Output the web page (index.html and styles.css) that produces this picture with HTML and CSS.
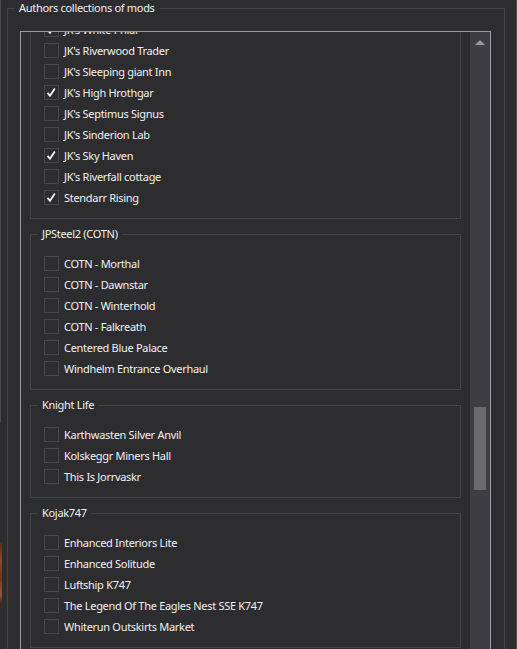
FILE: index.html
```html
<!DOCTYPE html>
<html>
<head>
<meta charset="utf-8">
<link rel="stylesheet" href="styles.css">
</head>
<body>
<div class="window">
  <div class="edge"><div class="edge-top"></div><div class="edge-img"></div></div>
  <fieldset class="outer">
    <legend>Authors collections of mods</legend>
    <div class="scroller">
      <div class="viewport">
        <div class="group first">
          <div class="rows shifted">
            <div class="row"><span class="box"><svg viewBox="0 0 15 15" width="15" height="15"><path d="M3.5 7.8 L6 10.8 L10.8 3.6" /></svg></span><span class="label">JK's White Phial</span></div>
            <div class="row"><span class="box"></span><span class="label">JK's Riverwood Trader</span></div>
            <div class="row"><span class="box"></span><span class="label">JK's Sleeping giant Inn</span></div>
            <div class="row"><span class="box"><svg viewBox="0 0 15 15" width="15" height="15"><path d="M3.5 7.8 L6 10.8 L10.8 3.6" /></svg></span><span class="label">JK's High Hrothgar</span></div>
            <div class="row"><span class="box"></span><span class="label">JK's Septimus Signus</span></div>
            <div class="row"><span class="box"></span><span class="label">JK's Sinderion Lab</span></div>
            <div class="row"><span class="box"><svg viewBox="0 0 15 15" width="15" height="15"><path d="M3.5 7.8 L6 10.8 L10.8 3.6" /></svg></span><span class="label">JK's Sky Haven</span></div>
            <div class="row"><span class="box"></span><span class="label">JK's Riverfall cottage</span></div>
            <div class="row"><span class="box"><svg viewBox="0 0 15 15" width="15" height="15"><path d="M3.5 7.8 L6 10.8 L10.8 3.6" /></svg></span><span class="label">Stendarr Rising</span></div>
          </div>
        </div>
        <fieldset class="group">
          <legend>JPSteel2 (COTN)</legend>
          <div class="rows">
            <div class="row"><span class="box"></span><span class="label">COTN - Morthal</span></div>
            <div class="row"><span class="box"></span><span class="label">COTN - Dawnstar</span></div>
            <div class="row"><span class="box"></span><span class="label">COTN - Winterhold</span></div>
            <div class="row"><span class="box"></span><span class="label">COTN - Falkreath</span></div>
            <div class="row"><span class="box"></span><span class="label">Centered Blue Palace</span></div>
            <div class="row"><span class="box"></span><span class="label">Windhelm Entrance Overhaul</span></div>
          </div>
        </fieldset>
        <fieldset class="group">
          <legend>Knight Life</legend>
          <div class="rows">
            <div class="row"><span class="box"></span><span class="label">Karthwasten Silver Anvil</span></div>
            <div class="row"><span class="box"></span><span class="label">Kolskeggr Miners Hall</span></div>
            <div class="row"><span class="box"></span><span class="label">This Is Jorrvaskr</span></div>
          </div>
        </fieldset>
        <fieldset class="group">
          <legend>Kojak747</legend>
          <div class="rows">
            <div class="row"><span class="box"></span><span class="label">Enhanced Interiors Lite</span></div>
            <div class="row"><span class="box"></span><span class="label">Enhanced Solitude</span></div>
            <div class="row"><span class="box"></span><span class="label">Luftship K747</span></div>
            <div class="row"><span class="box"></span><span class="label">The Legend Of The Eagles Nest SSE K747</span></div>
            <div class="row"><span class="box"></span><span class="label">Whiterun Outskirts Market</span></div>
          </div>
        </fieldset>
      </div>
      <div class="scrollbar">
        <div class="arrow"></div>
        <div class="thumb"></div>
      </div>
    </div>
  </fieldset>
  <div class="right-edge"></div>
</div>
</body>
</html>
```
FILE: styles.css
```css
html, body {
  margin: 0;
  padding: 0;
  background: #2d2d30;
}
.window {
  display: flex;
  align-items: flex-start;
  width: 517px;
  height: 649px;
  overflow: hidden;
  background: #2d2d30;
  font-family: "Noto Sans", "Liberation Sans", sans-serif;
  font-size: 11px;
  letter-spacing: -0.3px;
  color: #f1f1f1;
}
.edge {
  width: 2px;
  flex: none;
  display: flex;
  flex-direction: column;
}
.edge-top {
  width: 1px;
  height: 422px;
  background: #4b4b4f;
}
.edge-img {
  width: 2px;
  height: 60px;
  margin-top: 121px;
  background: linear-gradient(180deg, #5a2f17, #8b4a26 30%, #6e3a1c 60%, #9a5a32 85%, #4a2a18);
}
.outer {
  flex: none;
  box-sizing: border-box;
  width: 498px;
  margin: 0 0 0 5px;
  padding: 0 13px 0 12px;
  border: 1px solid #444448;
  min-width: 0;
}
.outer > legend {
  padding: 0 4px;
  margin-left: -5px;
  line-height: 16px;
}
.scroller {
  margin-top: 15px;
  display: flex;
  height: 700px;
  border: 1px solid #9a9aa0;
}
.viewport {
  flex: 1;
  overflow: hidden;
  min-width: 0;
}
.group {
  margin: 7px 9px 0;
  border: 1px solid #444448;
  padding: 11px 0 10px 7px;
  min-width: 0;
}
.group > legend {
  padding: 0 4px;
  line-height: 16px;
}
.group.first {
  margin-top: 0;
  border-top: none;
  padding: 0 0 10px 7px;
}
.rows {
  padding-left: 6px;
}
.rows.shifted {
  margin-top: -13px;
}
.row {
  display: flex;
  align-items: center;
  height: 21px;
  gap: 5px;
  white-space: nowrap;
}
.box {
  box-sizing: border-box;
  width: 15px;
  height: 15px;
  flex: none;
  border: 1px solid #46464b;
  position: relative;
}
.box svg {
  position: absolute;
  left: -1px;
  top: -1px;
}
.box path {
  fill: none;
  stroke: #f4f4f4;
  stroke-width: 1.8;
}
.label {
  line-height: 21px;
}
.scrollbar {
  width: 20px;
  flex: none;
  background: #3e3e42;
  display: flex;
  flex-direction: column;
  align-items: center;
}
.arrow {
  margin-top: 8px;
  width: 0;
  height: 0;
  border-left: 5px solid transparent;
  border-right: 5px solid transparent;
  border-bottom: 5px solid #999999;
}
.thumb {
  margin-top: 362px;
  width: 12px;
  height: 83px;
  background: #6b6b6b;
}
.right-edge {
  margin-left: auto;
  width: 1px;
  height: 649px;
  background: #4e4e52;
}
```
